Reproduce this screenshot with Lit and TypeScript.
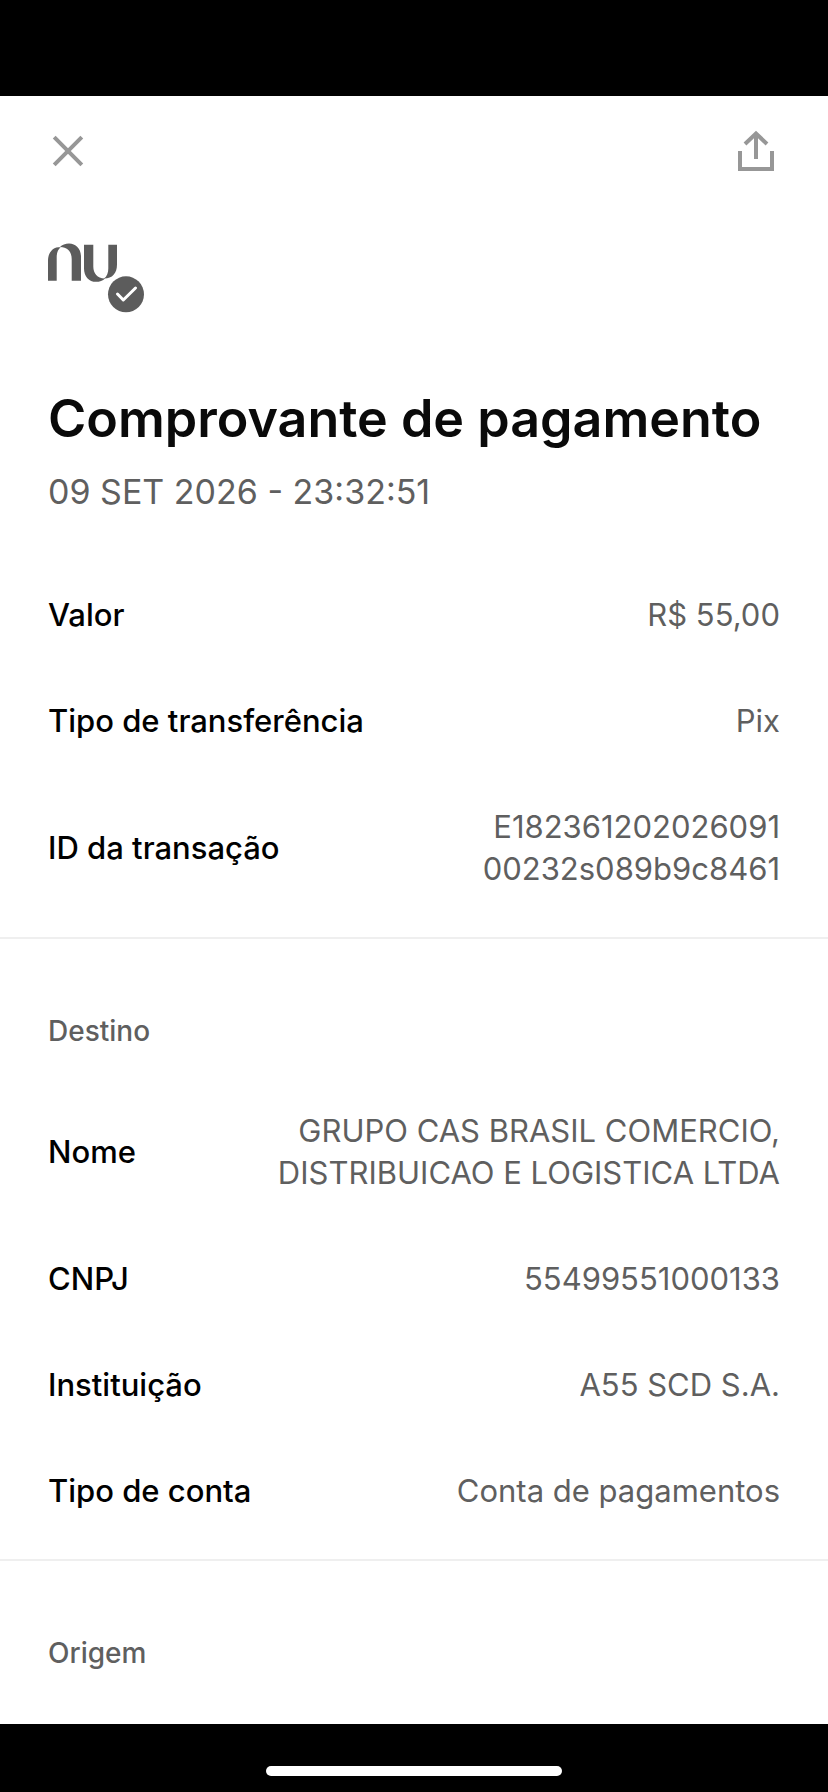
import { LitElement, html, css, svg } from "lit";
import { customElement, property } from "lit/decorators.js";

interface Entry {
  label: string;
  lines: string[];
}

const SUMMARY: Entry[] = [
  { label: "Valor", lines: ["R$ 55,00"] },
  { label: "Tipo de transferência", lines: ["Pix"] },
  { label: "ID da transação", lines: ["E182361202026091", "00232s089b9c8461"] },
];

const DESTINATION: Entry[] = [
  { label: "Nome", lines: ["GRUPO CAS BRASIL COMERCIO,", "DISTRIBUICAO E LOGISTICA LTDA"] },
  { label: "CNPJ", lines: ["55499551000133"] },
  { label: "Instituição", lines: ["A55 SCD S.A."] },
  { label: "Tipo de conta", lines: ["Conta de pagamentos"] },
];

const closeIcon = svg`<path d="M6.2 9.2 33.8 36.8M33.8 9.2 6.2 36.8" />`;
const shareIcon = svg`<path d="M4 23V41H36V23M20 31V6M9 16 20 5.5 31 16" />`;
const arch = svg`<path d="M0 43.7V24C0 15 5 9.8 13 10C10 12 8.7 16 8.7 20V43.7ZM12 10C14 7.8 17.5 6.6 21 6.6C28 6.6 33 12 33 20V43.7H23.7V22C23.7 15 19.5 9.8 12 10Z" />`;

@customElement("receipt-section")
export class ReceiptSection extends LitElement {
  @property() heading = "";
  @property({ attribute: false }) entries: Entry[] = [];

  static styles = css`
    :host {
      display: block;
      padding-bottom: 47px;
      border-bottom: 2px solid #efefef;
    }
    :host([last]) {
      border-bottom: 0;
    }
    .heading {
      margin: 0;
      padding: 73px 48px 60px;
      font-size: 28px;
      line-height: 38px;
      font-weight: 500;
      color: #5f5f5f;
    }
    .list {
      display: flex;
      flex-direction: column;
      gap: 64px;
      margin: 0;
      padding: 0 48px;
    }
    .row {
      display: flex;
      align-items: center;
      justify-content: space-between;
      gap: 32px;
      line-height: 42px;
    }
    .label {
      font-size: 31px;
      font-weight: 500;
      color: #000;
    }
    .value {
      margin: 0;
      font-size: 31px;
      font-weight: 400;
      color: #5f5f5f;
      text-align: right;
    }
    .line {
      display: block;
    }
  `;

  render() {
    return html`
      ${this.heading ? html`<h2 class="heading">${this.heading}</h2>` : ""}
      ${this.entries.length
        ? html`<dl class="list">
            ${this.entries.map(
              (e) => html`<div class="row">
                <dt class="label">${e.label}</dt>
                <dd class="value">${e.lines.map((l) => html`<span class="line">${l}</span>`)}</dd>
              </div>`
            )}
          </dl>`
        : ""}
    `;
  }
}

@customElement("app-root")
export class AppRoot extends LitElement {
  static styles = css`
    :host {
      display: flex;
      flex-direction: column;
      height: 100vh;
      background: #000;
      font-family: Inter, "Liberation Sans", sans-serif;
    }
    .status {
      flex: none;
      height: 96px;
    }
    .sheet {
      flex: 1;
      min-height: 0;
      overflow: hidden;
      background: #fff;
    }
    .toolbar {
      display: flex;
      justify-content: space-between;
      padding: 32px 48px 0;
    }
    .tool {
      display: block;
      padding: 0;
      border: 0;
      background: none;
      cursor: pointer;
    }
    .icon {
      display: block;
      fill: none;
      stroke: #979797;
      stroke-width: 4;
    }
    .logo {
      display: block;
      margin: 63px 48px 0;
      fill: #5c5c5c;
    }
    .tick {
      fill: none;
      stroke: #fff;
      stroke-width: 3;
      stroke-linecap: round;
      stroke-linejoin: round;
    }
    .title {
      margin: 0;
      padding: 70px 48px 0;
      font-size: 52px;
      line-height: 72px;
      font-weight: 600;
      color: #0a0a0a;
    }
    .date {
      margin: 0;
      padding: 14px 48px 79px;
      font-size: 34px;
      line-height: 46px;
      font-weight: 400;
      color: #5f5f5f;
    }
    .home {
      flex: none;
      display: flex;
      justify-content: center;
      height: 26px;
      padding-top: 42px;
    }
    .pill {
      width: 296px;
      height: 10px;
      border-radius: 5px;
      background: #fff;
    }
  `;

  render() {
    return html`
      <div class="status"></div>
      <main class="sheet">
        <nav class="toolbar">
          <button class="tool" aria-label="Fechar">
            <svg class="icon" width="44" height="46" viewBox="0 0 44 46">${closeIcon}</svg>
          </button>
          <button class="tool" aria-label="Compartilhar">
            <svg class="icon" width="44" height="46" viewBox="0 0 44 46">${shareIcon}</svg>
          </button>
        </nav>
        <svg class="logo" width="96" height="76" viewBox="0 0 96 76" role="img" aria-label="nu">
          ${arch}
          <g transform="rotate(180 34.5 25.7)">${arch}</g>
          <circle cx="78" cy="57.3" r="18" />
          <path class="tick" d="M69.5 57 75.3 63 87.5 51" />
        </svg>
        <h1 class="title">Comprovante de pagamento</h1>
        <p class="date">09 SET 2026 - 23:32:51</p>
        <receipt-section .entries=${SUMMARY}></receipt-section>
        <receipt-section heading="Destino" .entries=${DESTINATION}></receipt-section>
        <receipt-section last heading="Origem"></receipt-section>
      </main>
      <div class="home"><div class="pill"></div></div>
    `;
  }
}
